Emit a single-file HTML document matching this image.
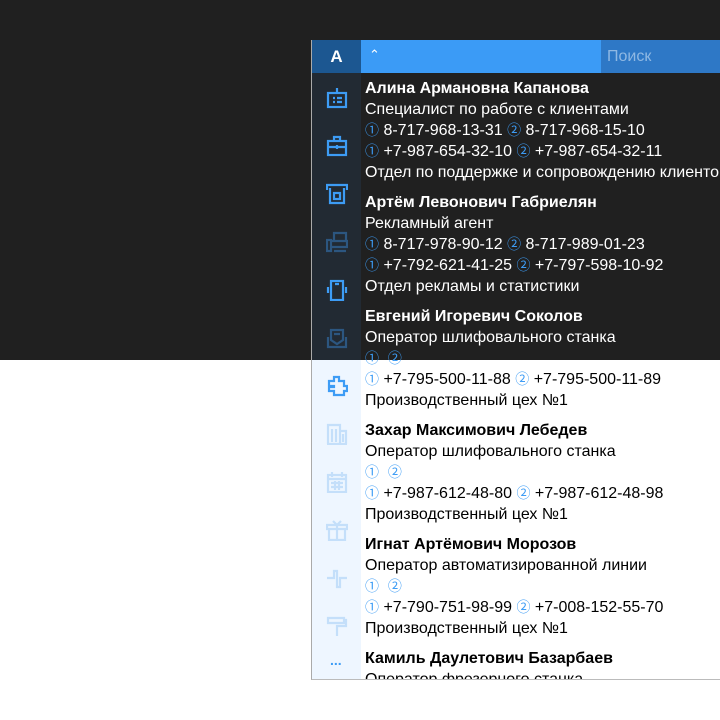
<!DOCTYPE html><html><head><meta charset="utf-8"><style>
body{margin:0;width:720px;height:720px;position:relative;overflow:hidden;background:#fff;font-family:"Liberation Sans",sans-serif}
.top{position:absolute;left:0;top:0;width:720px;height:360px;background:#202020}
.panel{position:absolute;left:311px;top:40px;width:409px;height:639px;border-left:1px solid #aaa;border-bottom:1px solid #bbb;overflow:hidden}
.hdr{position:absolute;top:0;left:0;width:409px;height:33px}
.a{position:absolute;left:0;width:49px;height:33px;background:#1c5791;color:#fff;font:bold 17px "Liberation Sans",sans-serif;text-align:center;line-height:33px}
.bar{position:absolute;left:49px;width:240px;height:33px;background:#3b9bf6;color:#fff;font-size:13px;line-height:30px;padding-left:8px;box-sizing:border-box}
.srch{position:absolute;left:289px;width:120px;height:33px;background:#2e78c6;color:#8fb8e3;font:16px "Liberation Sans",sans-serif;line-height:33px;padding-left:6px;box-sizing:border-box}
.side{position:absolute;left:0;top:33px;width:49px;height:606px;background:#eef6ff}
.sideD{position:absolute;left:0;top:33px;width:49px;height:287px;background:#222a33}
.list{position:absolute;left:49px;top:33px;width:360px;height:606px;overflow:hidden}
.list.d{background:#202020;color:#fff;clip-path:inset(0 0 286px 0)}
.list.l{background:#fff;color:#000;clip-path:inset(287px 0 0 0)}
.it{padding:5px 0 0 4px;height:109px;white-space:nowrap;font:16px "Liberation Sans","Noto Sans CJK SC",sans-serif}
.it div{height:21px;line-height:21px}
.n{font-weight:bold}
.c{color:#3d9cf5;font-size:14px}
svg{position:absolute;left:14px}
</style></head><body>
<div class="top"></div>
<div class="panel">
<div class="hdr"><div class="a">A</div><div class="bar">⌃</div><div class="srch">Поиск</div></div>
<div class="side"></div><div class="sideD"></div>
<svg style="top:47px" width="22" height="22" fill="none" stroke="#3d9cf5" stroke-width="2.2"><rect x="2" y="6" width="18" height="14"/><path d="M11 1v5M7 11h2M11 11h5M7 15h2M11 15h5"/></svg>
<svg style="top:95px" width="22" height="22" fill="none" stroke="#3d9cf5" stroke-width="2.2"><rect x="2" y="6" width="18" height="14"/><path d="M8 6V2h6v4M2 12h18M11 10v4"/></svg>
<svg style="top:143px" width="22" height="22" fill="none" stroke="#3d9cf5" stroke-width="2.2"><path d="M1 7V2h20v5M4 5v15h14V5"/><rect x="8" y="10" width="6" height="6"/></svg>
<svg style="top:191px" width="22" height="22" fill="none" stroke="#2c5680" stroke-width="2.2"><rect x="1" y="9" width="4" height="11"/><path d="M8 9V2h12v7M5 10h16v6H5M8 20h12"/></svg>
<svg style="top:239px" width="22" height="22" fill="none" stroke="#3d9cf5" stroke-width="2.2"><rect x="5" y="2" width="12" height="19"/><path d="M9 5h4M2 8v6M20 8v6"/></svg>
<svg style="top:287px" width="22" height="22" fill="none" stroke="#2c5680" stroke-width="2.2"><path d="M2 10v10h18V10M5 13V3h12v10l-6 4z M8 7h6"/></svg>
<svg style="top:335px" width="22" height="22" fill="none" stroke="#3d9cf5" stroke-width="2.2"><path d="M3 6h5V2h5v4h5v5h3v5h-3v4H8v-4H3v-4h5V11H3z"/></svg>
<svg style="top:383px" width="22" height="22" fill="none" stroke="#c4dffa" stroke-width="2.2"><path d="M2 21V2h12v19M14 8h6v13M1 21h20M6 6v13M10 6v13M17 11v8"/></svg>
<svg style="top:431px" width="22" height="22" fill="none" stroke="#c4dffa" stroke-width="2.2"><rect x="2" y="4" width="18" height="17"/><path d="M6 1v5M16 1v5M2 8h18M5 12h12M5 16h12M9 10v9M13 10v9"/></svg>
<svg style="top:479px" width="22" height="22" fill="none" stroke="#c4dffa" stroke-width="2.2"><path d="M3 10v11h16V10M1 6h20v4H1zM11 6v15M7 2l4 4 4-4"/></svg>
<svg style="top:527px" width="22" height="22" fill="none" stroke="#c4dffa" stroke-width="2.2"><path d="M1 11h7V4h3v16h3v-9h7"/></svg>
<svg style="top:575px" width="22" height="22" fill="none" stroke="#c4dffa" stroke-width="2.2"><path d="M2 3h16v5H2zM18 5h2v6h-9v10"/></svg>
<div style="position:absolute;left:18px;top:612px;color:#3d9cf5;font-size:14px;font-weight:bold">...</div>
<div class="list d" id="L"></div><div class="list l" id="L2"></div>
</div>
<script>
var h=`
<div class="it"><div class="n">Алина Армановна Капанова</div><div>Специалист по работе с клиентами</div><div><span class="c">①</span> 8-717-968-13-31 <span class="c">②</span> 8-717-968-15-10</div><div><span class="c">①</span> +7-987-654-32-10 <span class="c">②</span> +7-987-654-32-11</div><div>Отдел по поддержке и сопровождению клиентов</div></div>
<div class="it"><div class="n">Артём Левонович Габриелян</div><div>Рекламный агент</div><div><span class="c">①</span> 8-717-978-90-12 <span class="c">②</span> 8-717-989-01-23</div><div><span class="c">①</span> +7-792-621-41-25 <span class="c">②</span> +7-797-598-10-92</div><div>Отдел рекламы и статистики</div></div>
<div class="it"><div class="n">Евгений Игоревич Соколов</div><div>Оператор шлифовального станка</div><div><span class="c">①</span> &nbsp;<span class="c">②</span></div><div><span class="c">①</span> +7-795-500-11-88 <span class="c">②</span> +7-795-500-11-89</div><div>Производственный цех №1</div></div>
<div class="it"><div class="n">Захар Максимович Лебедев</div><div>Оператор шлифовального станка</div><div><span class="c">①</span> &nbsp;<span class="c">②</span></div><div><span class="c">①</span> +7-987-612-48-80 <span class="c">②</span> +7-987-612-48-98</div><div>Производственный цех №1</div></div>
<div class="it"><div class="n">Игнат Артёмович Морозов</div><div>Оператор автоматизированной линии</div><div><span class="c">①</span> &nbsp;<span class="c">②</span></div><div><span class="c">①</span> +7-790-751-98-99 <span class="c">②</span> +7-008-152-55-70</div><div>Производственный цех №1</div></div>
<div class="it"><div class="n">Камиль Даулетович Базарбаев</div><div>Оператор фрезерного станка</div></div>`;
document.getElementById('L').innerHTML=h;document.getElementById('L2').innerHTML=h;
</script>
</body></html>
